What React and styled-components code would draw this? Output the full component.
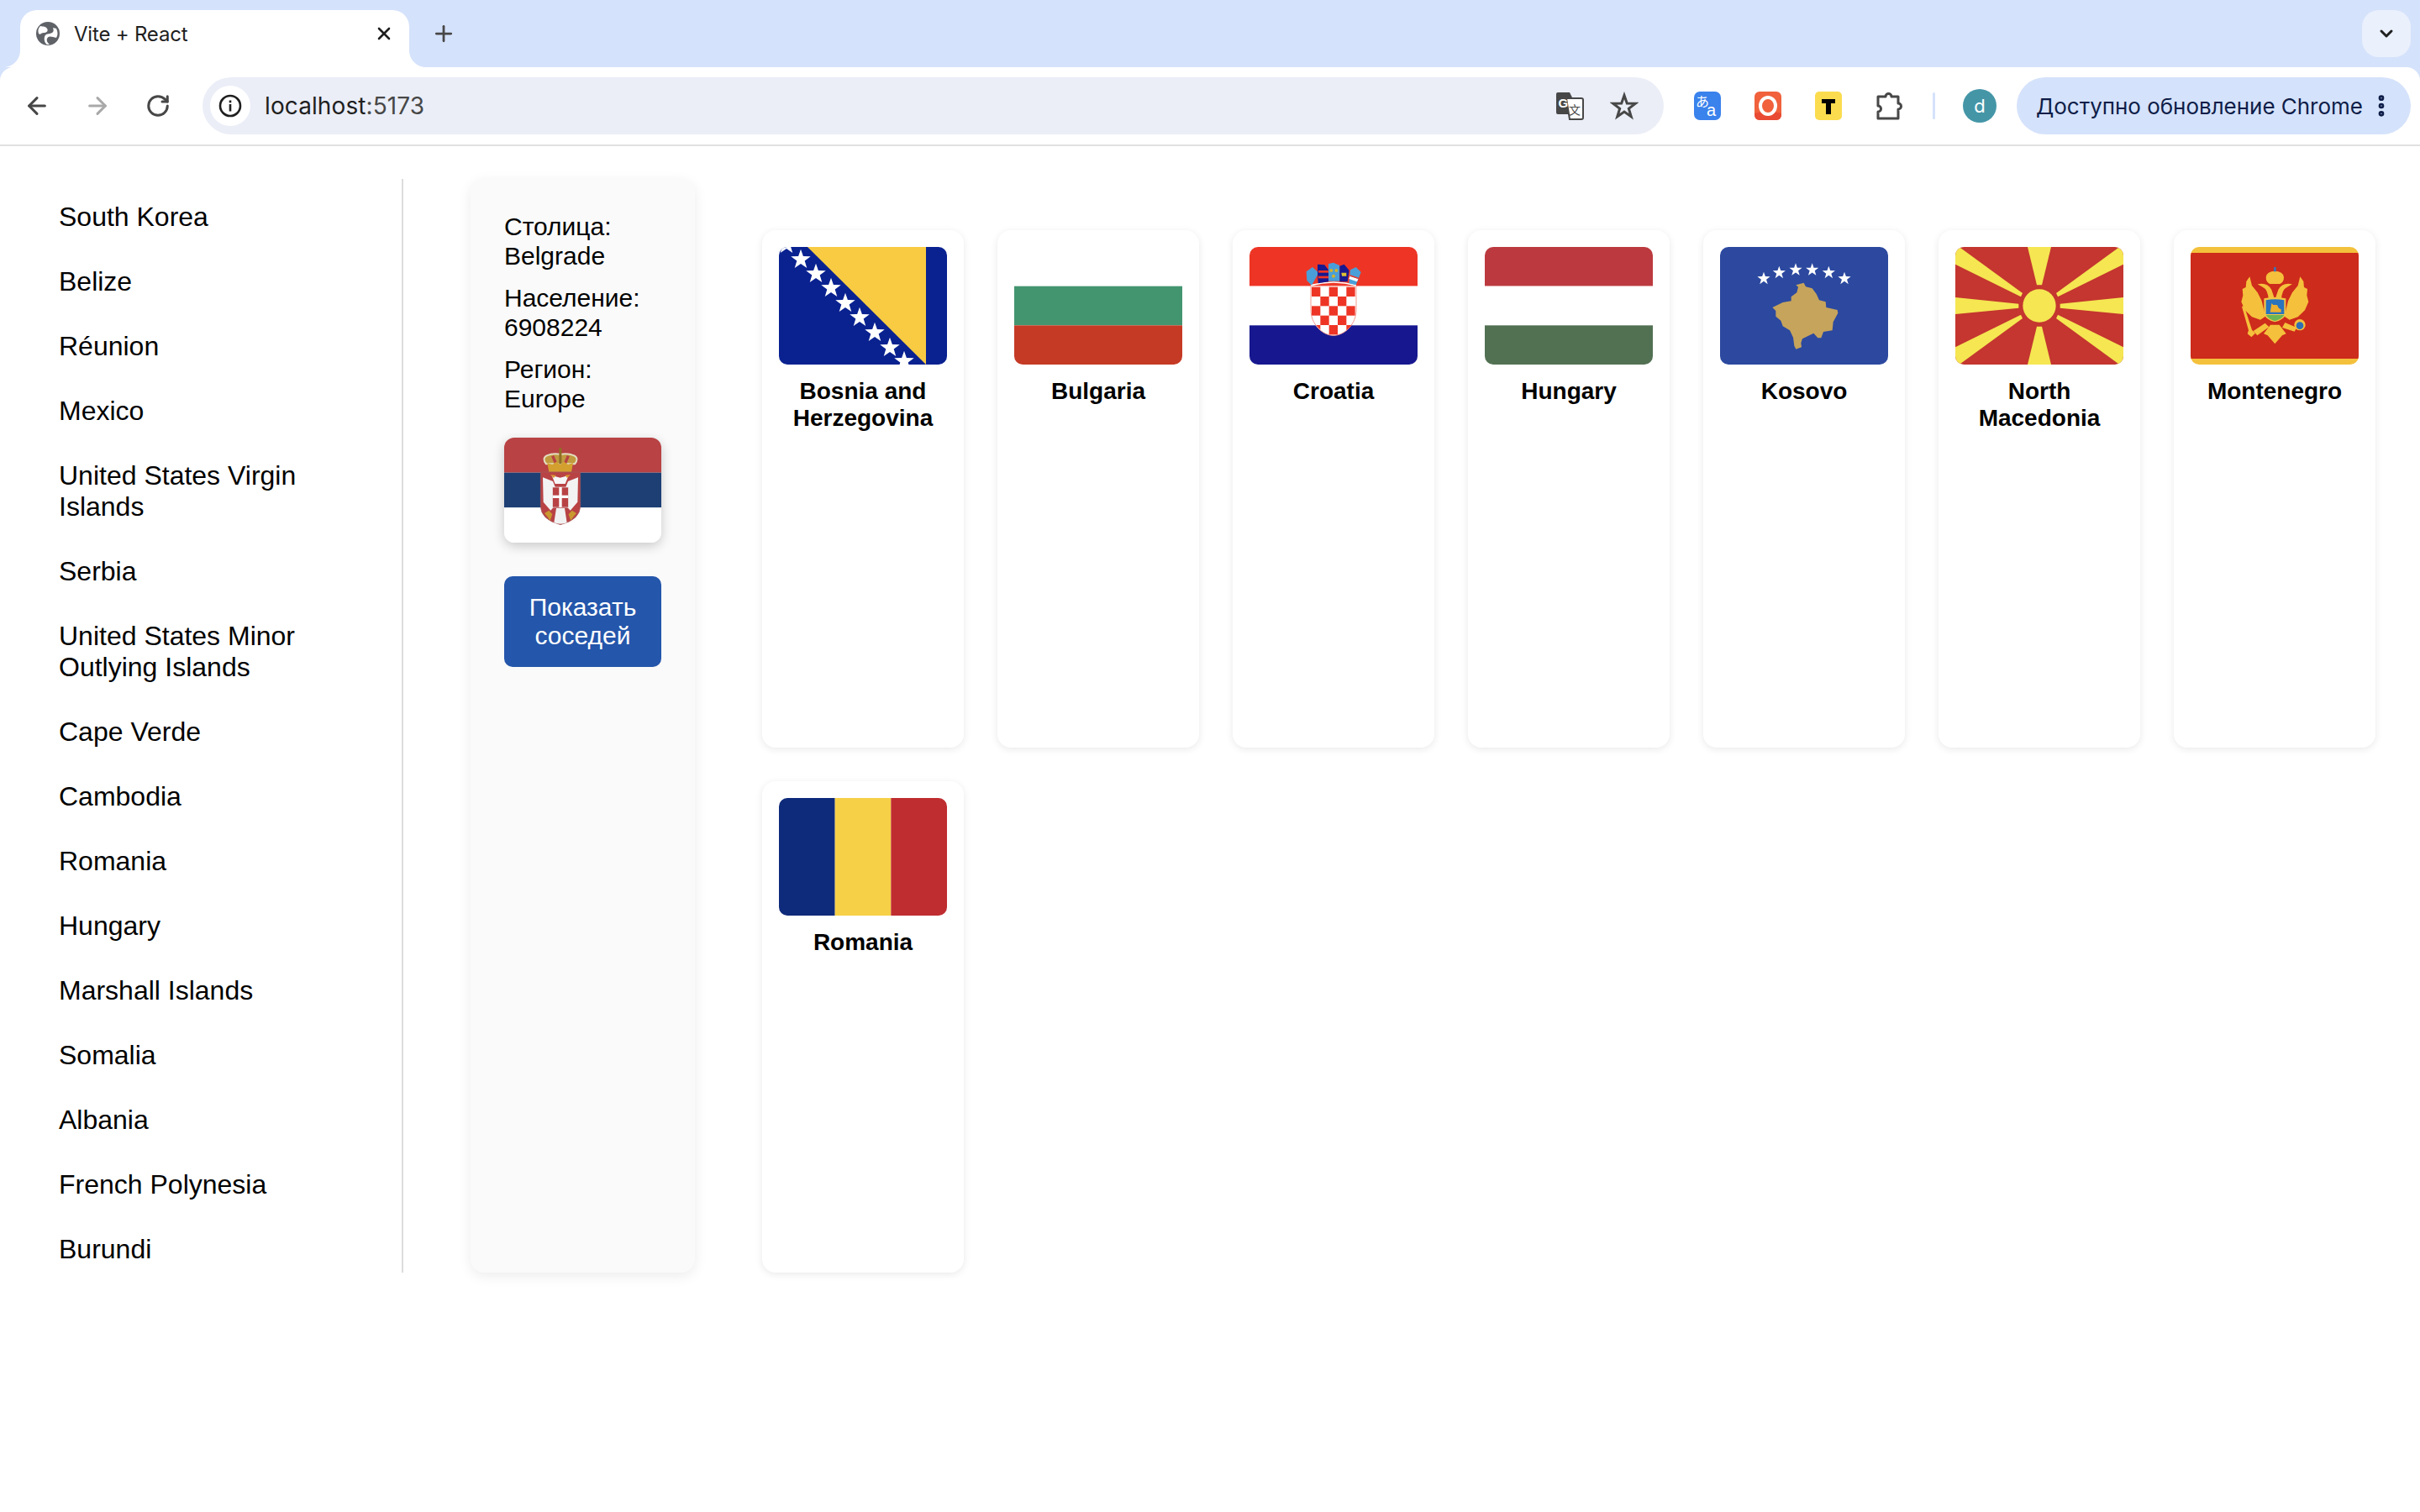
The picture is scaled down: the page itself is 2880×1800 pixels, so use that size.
import React from "react";
import styled, { createGlobalStyle } from "styled-components";
import { ArrowLeft, ArrowRight, RotateCw, X, Plus, ChevronDown, EllipsisVertical } from "lucide-react";

const Global = createGlobalStyle`
  html, body { margin: 0; padding: 0; background: #fff; }
  body { font-family: "Liberation Sans", Arial, sans-serif; color: #000; }
  * { box-sizing: border-box; }
`;

const Window = styled.div`width: 2880px; height: 1800px; overflow: hidden; background: #fff;`;
const Chrome = styled.header`background: #d5e2fb; font-family: Inter, "Noto Sans", sans-serif;`;
const TabStrip = styled.div`height: 80px; display: flex; align-items: flex-end; padding-left: 24px; padding-right: 11px;`;
const Tab = styled.div`
  position: relative; width: 463px; height: 68px; background: #fff; border-radius: 20px 20px 0 0;
  display: flex; align-items: center; padding: 0 18px 12px 18px; gap: 16px; color: #1f1f1f; font-size: 24px;
  &::before, &::after { content: ""; position: absolute; bottom: 0; width: 20px; height: 20px; }
  &::before { left: -20px; background: radial-gradient(circle at 0 0, transparent 19.5px, #fff 20.5px); }
  &::after { right: -20px; background: radial-gradient(circle at 100% 0, transparent 19.5px, #fff 20.5px); }
`;
const TabTitle = styled.span`flex: 1; letter-spacing: -0.2px;`;
const NewTab = styled.div`width: 40px; height: 56px; margin-left: 21px; margin-bottom: 12px; display: flex; align-items: center; justify-content: center; color: #474747;`;
const Spacer = styled.div`flex: 1;`;
const TabSearch = styled.div`width: 58px; height: 56px; margin-bottom: 12px; border-radius: 20px; background: #eaf0fc; display: flex; align-items: center; justify-content: center; color: #1f1f1f;`;

const Toolbar = styled.div`
  height: 94px; background: #fff; border-radius: 16px 16px 0 0; border-bottom: 2px solid #e1e1e1;
  display: flex; align-items: center; padding-left: 8px; padding-right: 11px;
`;
const NavButton = styled.div`width: 72px; height: 72px; display: flex; align-items: center; justify-content: center; color: ${p => p.$dim ? "#a9a9a9" : "#474747"};`;
const Omnibox = styled.div`
  width: 1739px; height: 68px; margin-left: 17px; border-radius: 34px; background: #ebeef7;
  display: flex; align-items: center; padding-left: 9px; padding-right: 30px;
`;
const InfoChip = styled.div`width: 48px; height: 48px; border-radius: 50%; background: #fff; display: flex; align-items: center; justify-content: center; flex: none;`;
const Url = styled.div`flex: 1; margin-left: 17px; font-size: 28px; color: #1f1f1f; letter-spacing: 0.1px; span { color: #474747; }`;
const OmniIcon = styled.div`width: 34px; height: 34px; margin-left: ${p => p.$gap || 0}px; display: flex; align-items: center; justify-content: center; color: #474747;`;
const ExtSlot = styled.div`width: 72px; height: 72px; display: flex; align-items: center; justify-content: center; flex: none;`;
const ExtGroup = styled.div`display: flex; margin-left: 16px;`;
const Divider = styled.div`width: 3px; height: 32px; background: #d5e2fb; margin-left: 16px; border-radius: 2px;`;
const Avatar = styled.div`width: 40px; height: 40px; margin-left: 33px; border-radius: 50%; background: #4496a7; color: #fff; font-size: 22px; display: flex; align-items: center; justify-content: center;`;
const UpdatePill = styled.div`
  width: 469px; height: 68px; margin-left: 24px; border-radius: 34px; background: #d5e2fb; color: #0e1d48;
  display: flex; align-items: center; padding-left: 23px; font-size: 26px; white-space: nowrap; gap: 6px; letter-spacing: -0.03px;
`;

const Main = styled.main`display: flex; align-items: flex-start; padding-top: 39px;`;
const Sidebar = styled.ul`
  list-style: none; margin: 0; width: 480px; height: 1302px; border-right: 2px solid #dcdcdc; overflow: hidden;
  padding: 27px 60px 0 70px; display: flex; flex-direction: column; gap: 40px; font-size: 32px; line-height: 37px;
`;
const Panel = styled.aside`
  width: 267px; height: 1302px; margin-left: 80px; padding: 40px 40px; background: #fafafa; border-radius: 16px;
  box-shadow: 0 4px 16px rgba(0,0,0,.08); font-size: 30px; line-height: 34.5px;
`;
const Facts = styled.div`display: flex; flex-direction: column; gap: 16px; margin-bottom: 29px;`;
const Fact = styled.p`margin: 0;`;
const Button = styled.button`
  display: block; width: 187px; height: 108px; margin-top: 40px; border: 0; border-radius: 10px; background: #2456ab; color: #fff;
  font: inherit; line-height: 34.5px; padding: 0 8px;
`;
const CardGrid = styled.section`
  display: grid; grid-template-columns: repeat(7, 240px); grid-template-rows: 616px 585px; gap: 40px; margin-left: 80px; margin-top: 61px;
`;
const Card = styled.article`
  background: #fff; border-radius: 16px; box-shadow: 0 2px 10px rgba(0,0,0,.09); padding: 20px; text-align: center;
`;
const CardTitle = styled.h3`margin: 16px 0 0; font-size: 28px; line-height: 32px; font-weight: 700;`;
const FlagSvg = styled.svg`display: block; width: ${p => p.$w}px; height: ${p => p.$h}px; border-radius: ${p => p.$r}px; ${p => p.$shadow ? "box-shadow: 0 4px 14px rgba(0,0,0,.2);" : ""}`;

const starPts = (cx, cy, r) => {
  const out = [];
  for (let i = 0; i < 10; i++) {
    const a = -Math.PI / 2 + i * Math.PI / 5;
    const rr = i % 2 ? r * 0.4 : r;
    out.push(`${(cx + rr * Math.cos(a)).toFixed(2)},${(cy + rr * Math.sin(a)).toFixed(2)}`);
  }
  return out.join(" ");
};
const Flag = ({ children, w = 200, h = 140, r = 10, shadow, vb = "0 0 600 420" }) => (
  <FlagSvg viewBox={vb} preserveAspectRatio="none" $w={w} $h={h} $r={r} $shadow={shadow}>{children}</FlagSvg>
);
const Stripes = ({ a, b, c }) => (
  <>
    <rect width="600" height="140" y="0" fill={a} />
    <rect width="600" height="140" y="140" fill={b} />
    <rect width="600" height="140" y="280" fill={c} />
  </>
);

const Bosnia = () => (
  <Flag>
    <rect width="600" height="420" fill="#0a2290" />
    <polygon points="102,0 525,0 525,420" fill="#f8cb42" />
    {[[27,-9],[78,45],[132,96],[186,147],[237,201],[288,252],[342,306],[396,360],[447,408]].map(([x,y],i) => (
      <polygon key={i} points={starPts(x,y,37)} fill="#fff" />
    ))}
  </Flag>
);
const Bulgaria = () => <Flag><Stripes a="#fff" b="#439570" c="#c53a25" /></Flag>;
const Hungary = () => <Flag><Stripes a="#bc3a3f" b="#fff" c="#527153" /></Flag>;
const Croatia = () => {
  const cells = [];
  for (let r = 0; r < 6; r++) for (let c = 0; c < 5; c++) {
    if ((r + c) % 2 === 0) cells.push(<rect key={`${r}-${c}`} x={222 + c * 31} y={143 + r * 34} width="31" height="34" fill="#ee3525" />);
  }
  return (
    <Flag>
      <Stripes a="#ee3525" b="#fff" c="#17188f" />
      <clipPath id="hr"><path d="M220 140H382V225C382 275 340 314 301 316C262 314 220 275 220 225Z" /></clipPath>
      <path d="M219 139H381V225C381 275 340 316 300 316C260 316 219 275 219 225Z" fill="#fff" stroke="#f59a90" strokeWidth="3" />
      <g clipPath="url(#hr)">{cells}</g>
      <path d="M219 137Q300 115 381 137" fill="none" stroke="#fff" strokeWidth="5" />
      <polygon points="203,88 225,72 247,92 222,137 205,120" fill="#4a9fd8" />
      <polygon points="243,62 268,64 285,86 282,124 245,130 243,92" fill="#17188f" />
      <rect x="246" y="84" width="36" height="8" fill="#ee3525" />
      <rect x="246" y="104" width="36" height="8" fill="#ee3525" />
      <polygon points="282,60 300,56 322,66 322,122 282,122" fill="#4a9fd8" />
      <circle cx="292" cy="84" r="6" fill="#d6b229" /><circle cx="310" cy="84" r="6" fill="#d6b229" /><circle cx="300" cy="104" r="6" fill="#d6b229" />
      <polygon points="322,68 338,62 356,84 350,124 322,124" fill="#17188f" />
      <path d="M328 92h18v12h-16z" fill="#dfc032" />
      <polygon points="360,82 380,72 398,90 380,136 355,130" fill="#4a9fd8" />
      <polygon points="358,104 388,114 384,124 355,114" fill="#fff" />
      <polygon points="360,100 390,110 388,114 358,104" fill="#ee3525" />
    </Flag>
  );
};
const Kosovo = () => (
  <Flag>
    <rect width="600" height="420" fill="#2c499f" />
    <g transform="translate(-51,-42)">
      {[[207,155],[262,134],[321,124],[380,124],[439,134],[495,155]].map(([x,y],i) => (
        <polygon key={i} points={starPts(x,y,24)} fill="#fff" />
      ))}
      <polygon fill="#c6a45c" points="350,170 357,184 380,190 395,210 405,232 428,238 430,258 470,267 472,278 455,310 452,340 420,345 412,367 400,367 385,350 345,370 340,385 342,400 322,407 316,395 312,365 300,340 275,325 268,305 250,290 250,270 238,258 255,250 275,240 305,235 305,220 325,205 330,185 322,178" />
    </g>
  </Flag>
);
const Macedonia = () => (
  <Flag>
    <rect width="600" height="420" fill="#c4362f" />
    <g fill="#f5e652">
      <circle cx="300" cy="210" r="59" />
      <polygon points="258,0 342,0 309,136 291,136" />
      <polygon points="258,420 342,420 309,284 291,284" />
      <polygon points="0,180 226,203 226,218 0,240" />
      <polygon points="600,180 374,203 374,218 600,240" />
      <polygon points="14,0 240,165 234,178 0,62 0,5" />
      <polygon points="586,0 360,165 366,178 600,62 600,5" />
      <polygon points="14,420 240,255 234,242 0,358 0,415" />
      <polygon points="586,420 360,255 366,242 600,358 600,415" />
    </g>
  </Flag>
);
const Montenegro = () => (
  <Flag>
    <rect width="600" height="420" fill="#f4c13c" />
    <rect y="21" width="600" height="378" fill="#cd2b1b" />
    <g transform="translate(-51,-42)" fill="#f5c03c">
      <path d="M320 150a32 22 0 0 1 64 0q0 18-14 24h-36q-14-6-14-24z" />
      <rect x="348" y="114" width="8" height="16" fill="#3c73b5" />
      <polygon points="262,148 270,180 290,205 305,235 318,290 300,302 270,292 245,268 232,238 238,215 236,192 248,186 250,165" />
      <polygon points="442,148 434,180 414,205 399,235 386,290 404,302 434,292 459,268 472,238 466,215 468,192 456,186 454,165" />
      <path d="M290 175q35-8 50 20l12 35 12-35q15-28 50-20l-18 10q-20 8-22 50h-44q-2-42-22-50z" />
      <polygon points="312,352 336,320 368,320 392,352 378,358 352,388 326,358" />
      <path d="M234 255l8-3 28 86 12 12-14 14-14-12 4-12z" />
      <path d="M275 342l42-28 14 14-42 30z M388 312l42 18-8 14-44-14z" />
      <circle cx="441" cy="320" r="20" />
      <circle cx="441" cy="323" r="13" fill="#2f6fb5" />
      <path d="M313 226q39-8 78 0v58q-10 18-39 26-29-8-39-26z" fill="#f2c545" />
      <path d="M320 232q32-6 65 0v50h-65z" fill="#2a73bd" />
      <path d="M320 285h65q-8 14-33 22-24-8-32-22z" fill="#6db652" />
      <path d="M335 275l5-32 6 6 14 0 6 12 8 4v10z" fill="#eeb030" />
    </g>
  </Flag>
);
const Romania = () => (
  <Flag>
    <rect width="200" height="420" fill="#0e2a7a" />
    <rect x="200" width="200" height="420" fill="#f6d047" />
    <rect x="400" width="200" height="420" fill="#bf2d30" />
  </Flag>
);
const Serbia = () => (
  <Flag w={187} h={125} r={12} shadow vb="0 0 561 375">
    <rect width="561" height="125" fill="#b84244" />
    <rect y="125" width="561" height="125" fill="#1d3f74" />
    <rect y="250" width="561" height="125" fill="#fff" />
    <g transform="translate(-30,-30)">
      <path d="M180 124q-16-20 2-30 24-10 49-4 25-6 49 4 18 10 2 30z" fill="#c19a3f" stroke="#e3dcc0" strokeWidth="6" />
      <path d="M203 95l12 28M259 95l-12 28" stroke="#b84244" strokeWidth="10" />
      <rect x="226" y="66" width="9" height="58" fill="#8f6f25" />
      <path d="M184 120l18 6 14-10 14 10 14-10 14 10 18-6-6 32h-80z" fill="#d3a02f" />
      <path d="M160 153h142v120q0 50-71 68-71-18-71-68z" fill="#b84244" stroke="#a05a5f" strokeWidth="2" />
      <path d="M168 172l36 14 8 20v66l-16 18-26-30z" fill="#f3f3f3" />
      <path d="M294 172l-36 14-8 20v66l16 18 26-30z" fill="#f3f3f3" />
      <path d="M200 165l30 8 30-8-12 30h-36z" fill="#f6f6f6" />
      <path d="M195 162l20 2-8 10z M267 162l-20 2 8 10z" fill="#d9952f" />
      <rect x="203" y="207" width="56" height="72" fill="#b84244" stroke="#e6e6e6" strokeWidth="2" />
      <rect x="226" y="207" width="10" height="72" fill="#fff" />
      <rect x="203" y="236" width="56" height="10" fill="#fff" />
      <path d="M208 334l8-52h30l8 52q-23 8-46 0z" fill="#f1f1f1" />
      <path d="M174 300l16-10 12 14-8 22-8-12z M288 300l-16-10-12 14 8 22 8-12z" fill="#c9982f" />
    </g>
  </Flag>
);

const Globe = () => (
  <svg width="30" height="30" viewBox="0 0 30 30">
    <circle cx="15" cy="15" r="14" fill="#5f6368" />
    <path d="M6 6c4 1 6 0 8 3s-1 5-4 5-4 3-6 1C3 12 3 9 6 6zM21 8l4 1c2 4 2 8 0 11l-4-1c-3-1-6-1-7 2s1 5 3 7l-3 0c-2-1-4-5-3-9 1-5 6-3 9-5 2-1 2-4 1-6z" fill="#fff" />
  </svg>
);
const InfoIcon = () => (
  <svg width="28" height="28" viewBox="0 0 28 28" fill="none">
    <circle cx="14" cy="14" r="12" stroke="#1f1f1f" strokeWidth="2.6" />
    <rect x="12.7" y="12" width="2.6" height="8.5" fill="#1f1f1f" />
    <rect x="12.7" y="7.5" width="2.6" height="2.8" fill="#1f1f1f" />
  </svg>
);
const TranslateIcon = () => (
  <svg width="34" height="34" viewBox="0 0 34 34">
    <path d="M3 1h14l3 6v20H3a2 2 0 0 1-2-2V3a2 2 0 0 1 2-2z" fill="#474747" />
    <path d="M13 8h18a2 2 0 0 1 2 2v21a2 2 0 0 1-2 2H17l-4-25z" fill="#fff" stroke="#474747" strokeWidth="2" />
    <text x="3.5" y="19" fontSize="15" fontWeight="700" fill="#fff" fontFamily="Liberation Sans">G</text>
    <text x="16" y="27" fontSize="14" fill="#474747" fontFamily="Noto Sans CJK SC">文</text>
  </svg>
);
const StarIcon = () => (
  <svg width="34" height="34" viewBox="0 0 34 34">
    <polygon points={starPts(17, 18.5, 14)} fill="none" stroke="#474747" strokeWidth="3" strokeLinejoin="miter" />
  </svg>
);
const BlueExt = () => (
  <svg width="32" height="34" viewBox="0 0 32 34">
    <rect width="32" height="34" rx="7" fill="#3a82ec" />
    <text x="2" y="18" fontSize="16" fill="#fff" fontFamily="Noto Sans CJK JP">あ</text>
    <text x="15" y="29" fontSize="20" fill="#fff" fontFamily="Liberation Sans">a</text>
  </svg>
);
const OrangeExt = () => (
  <svg width="32" height="34" viewBox="0 0 32 34">
    <rect width="32" height="34" rx="6" fill="#f0613c" />
    <path d="M0 26l9-2 7 3 7-3 9 2v2a6 6 0 0 1-6 6H6a6 6 0 0 1-6-6z" fill="#e94a33" />
    <ellipse cx="16" cy="17" rx="9" ry="10" fill="none" stroke="#fff" strokeWidth="4" />
  </svg>
);
const YellowExt = () => (
  <svg width="32" height="34" viewBox="0 0 32 34">
    <rect width="32" height="34" rx="5" fill="#fbdc4e" />
    <path d="M8 9h16v5h-5v13h-6V14H8z" fill="#000" />
  </svg>
);
const PuzzleIcon = () => (
  <svg width="34" height="36" viewBox="0 0 34 36" fill="none" stroke="#474747" strokeWidth="3" strokeLinejoin="round">
    <path d="M4 7h9a3.5 3.5 0 1 1 7 0h8v8a3.5 3.5 0 1 1 0 7v11H4v-8a3.5 3.5 0 1 0 0-7z" />
  </svg>
);

const countries = ["South Korea","Belize","Réunion","Mexico","United States Virgin Islands","Serbia","United States Minor Outlying Islands","Cape Verde","Cambodia","Romania","Hungary","Marshall Islands","Somalia","Albania","French Polynesia","Burundi"];
const neighbours = [
  ["Bosnia and Herzegovina", Bosnia],["Bulgaria", Bulgaria],["Croatia", Croatia],["Hungary", Hungary],
  ["Kosovo", Kosovo],["North Macedonia", Macedonia],["Montenegro", Montenegro],["Romania", Romania],
];

export default function App() {
  return (
    <Window>
      <Global />
      <Chrome>
        <TabStrip>
          <Tab>
            <Globe />
            <TabTitle>Vite + React</TabTitle>
            <X size={24} strokeWidth={2.6} color="#1f1f1f" />
          </Tab>
          <NewTab><Plus size={30} strokeWidth={2.2} /></NewTab>
          <Spacer />
          <TabSearch><ChevronDown size={24} strokeWidth={3} /></TabSearch>
        </TabStrip>
        <Toolbar>
          <NavButton><ArrowLeft size={32} strokeWidth={2.3} /></NavButton>
          <NavButton $dim><ArrowRight size={32} strokeWidth={2.3} /></NavButton>
          <NavButton><RotateCw size={30} strokeWidth={2.4} /></NavButton>
          <Omnibox>
            <InfoChip><InfoIcon /></InfoChip>
            <Url>localhost<span>:5173</span></Url>
            <OmniIcon><TranslateIcon /></OmniIcon>
            <OmniIcon $gap={31}><StarIcon /></OmniIcon>
          </Omnibox>
          <ExtGroup>
            <ExtSlot><BlueExt /></ExtSlot>
            <ExtSlot><OrangeExt /></ExtSlot>
            <ExtSlot><YellowExt /></ExtSlot>
            <ExtSlot><PuzzleIcon /></ExtSlot>
          </ExtGroup>
          <Divider />
          <Avatar>d</Avatar>
          <UpdatePill>
            Доступно обновление Chrome
            <EllipsisVertical size={32} strokeWidth={3} />
          </UpdatePill>
        </Toolbar>
      </Chrome>
      <Main>
        <Sidebar>
          {countries.map(c => <li key={c}>{c}</li>)}
        </Sidebar>
        <Panel>
          <Facts>
            <Fact>Столица: Belgrade</Fact>
            <Fact>Население: 6908224</Fact>
            <Fact>Регион: Europe</Fact>
          </Facts>
          <Serbia />
          <Button>Показать соседей</Button>
        </Panel>
        <CardGrid>
          {neighbours.map(([name, F]) => (
            <Card key={name}>
              <F />
              <CardTitle>{name}</CardTitle>
            </Card>
          ))}
        </CardGrid>
      </Main>
    </Window>
  );
}
